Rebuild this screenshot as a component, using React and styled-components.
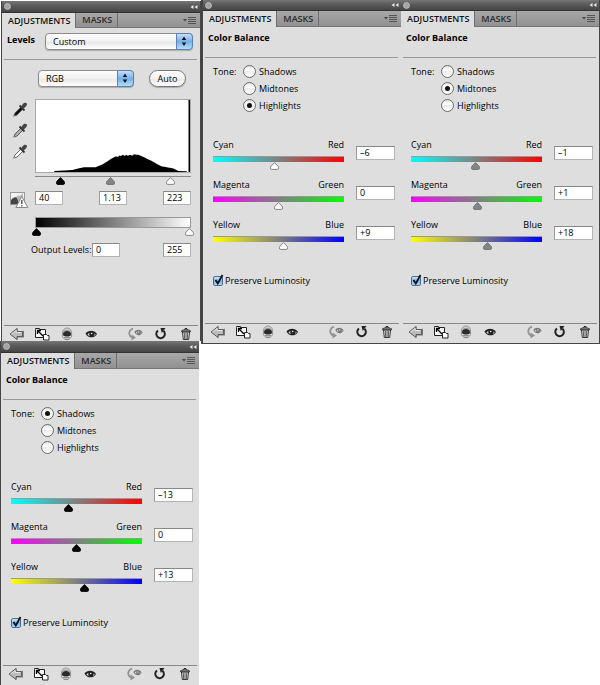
import { useId, useState } from 'react';
import styled, { createGlobalStyle, css } from 'styled-components';

const GlobalStyle = createGlobalStyle`
  * {
    box-sizing: border-box;
  }

  body {
    margin: 0;
    background: #fff;
    color: #000;
    font-family: "Lucida Grande", "Open Sans", "Noto Sans", sans-serif;
    font-size: 9px;
    line-height: 14px;
  }

  button, input, select {
    margin: 0;
    padding: 0;
    color: inherit;
    font: inherit;
  }
`

const thumbImage = (fill, stroke) =>
  `url("data:image/svg+xml,${encodeURIComponent(
    `<svg xmlns="http://www.w3.org/2000/svg" width="9" height="8"><path d="M4.500.6 L8 4.200 Q8.500 4.800 8.500 5.500 V6 Q8.500 7.400 7.500 7.400 H1.500 Q.5 7.400 .5 6 V5.500 Q.5 4.800 1 4.200Z" fill="${fill}" stroke="${stroke}" stroke-width=".9"/></svg>`
  )}")`

const thumbs = {
  black: thumbImage('#000', '#000'),
  gray: thumbImage('#858585', '#6c6c6c'),
  white: thumbImage('#fff', '#777'),
}

const Page = styled.div`
  display: grid;
  grid-template-columns: 201fr 200fr 199fr;
  align-items: start;
`

const PanelBox = styled.section`
  display: flex;
  flex-direction: column;
  background: #dedede;
  border: 0 solid #454545;
  ${({ $kind }) => $kind === 'levels' && css`
    margin: 1px 0 0 1px;
    border-width: 0 1px;
  `}
  ${({ $kind }) => $kind === 'shadows' && css`
    margin-right: 2px;
    border-left-width: 1px;
  `}
  ${({ $kind }) => $kind === 'highlights' && css`
    border-width: 0 0 1px 2px;
  `}
  ${({ $kind }) => $kind === 'midtones' && css`
    border-width: 0 1px 1px 0;
  `}
`

const TitleBar = styled.header`
  display: flex;
  align-items: center;
  justify-content: space-between;
  height: ${({ $tall }) => ($tall ? 12 : 11)}px;
  padding: 0 2px;
  background: linear-gradient(#777, #5c5c5c 40%, #454545);
  border-bottom: 1px solid #333;
`

const BarButton = styled.button`
  display: flex;
  border: 0;
  background: none;
`

const Tabs = styled.div`
  display: flex;
  height: ${({ $short }) => ($short ? 15 : 16)}px;
  background: linear-gradient(#a8a8a8, #909090);
`

const Tab = styled.button`
  padding: 0 5px 0 6px;
  border: 0;
  border-right: 1px solid #6e6e6e;
  border-bottom: ${({ $active }) => ($active ? '0' : '1px solid #777')};
  background: ${({ $active }) => ($active ? '#dedede' : 'transparent')};
  color: ${({ $active }) => ($active ? '#111' : '#2a2a2a')};
  font-weight: 600;
`

const MenuButton = styled(BarButton)`
  flex: 1;
  align-items: center;
  justify-content: flex-end;
  padding-right: 4px;
  border-bottom: 1px solid #777;
`

const Heading = styled.div`
  display: flex;
  align-items: flex-start;
  gap: 10px;
  height: ${({ $levels }) => ($levels ? 32 : 31)}px;
  margin: 0 3px 0 2px;
  padding: ${({ $levels }) => ($levels ? '5px 4px 0 3px' : '4px 3px')};
  border-bottom: 1px solid #999;

  h2 {
    margin: 0;
    font-size: 9px;
    font-weight: 700;
    line-height: 14px;
  }
`

const SelectBox = styled.div`
  position: relative;
  flex: ${({ $width }) => ($width ? `0 1 ${$width}px` : '1')};

  select {
    display: block;
    width: 100%;
    height: 17px;
    padding: 0 22px 0 7px;
    border: 1px solid #8b8b8b;
    border-radius: 4px;
    appearance: none;
    background: linear-gradient(#fff, #f0f0f0 50%, #e6e6e6 51%, #fff);
    box-shadow: 0 1px 1px #aaa;
  }

  svg {
    position: absolute;
    top: 0;
    right: 0;
    pointer-events: none;
  }
`

const AutoButton = styled.button`
  width: 37px;
  height: 17px;
  border: 1px solid #777;
  border-radius: 9px;
  background: linear-gradient(#fff, #f1f1f1 50%, #e8e8e8 51%, #fff);
  box-shadow: 0 1px 1px #aaa;
`

const LevelsBody = styled.div`
  height: 265px;
  padding: 10px 9px 0 0;
`

const ChannelRow = styled.div`
  display: flex;
  justify-content: space-between;
  padding: 0 5px 0 36px;
`

const LevelsGrid = styled.div`
  display: grid;
  grid-template-columns: 33px minmax(0, 1fr);
  margin-top: 12px;
`

const Droppers = styled.div`
  display: flex;
  flex-direction: column;
  align-items: center;
  gap: 6px;
  padding: 3px 0 0 2px;
`

const Chart = styled.svg`
  display: block;
  width: 100%;
  height: 74px;
  border: 1px solid #aaa;
  background: #fff;
`

const ThumbTrack = styled.div`
  display: grid;
  height: ${({ $line }) => ($line ? 11 : 8)}px;
  margin-top: ${({ $line }) => ($line ? 3 : 0)}px;
  border-top: ${({ $line }) => ($line ? '1px solid #888' : '0')};

  input {
    grid-area: 1 / 1;
    height: 8px;
    margin: 0 -3px;
    pointer-events: none;
  }
`

const Range = styled.input`
  display: block;
  min-width: 0;
  appearance: none;
  background: none;

  &::-webkit-slider-thumb {
    width: 9px;
    height: 8px;
    border: 0;
    appearance: none;
    background: ${({ $thumb }) => thumbs[$thumb]} no-repeat;
    pointer-events: auto;
  }
`

const ValueInput = styled.input`
  width: ${({ $wide }) => ($wide ? 39 : 28)}px;
  height: 14px;
  padding: 0 3px;
  border: 1px solid #b4b4b4;
  border-top-color: #888;
  border-left-color: #999;
  background: #fff;
`

const ValueRow = styled.div`
  display: flex;
  justify-content: space-between;
  margin-top: 4px;
`

const ModeCell = styled.div`
  display: flex;
  justify-content: center;
  padding: 4px 0 0 1px;
`

const OutputRamp = styled.div`
  grid-column: 2;
  height: 11px;
  margin-top: 8px;
  border: 1px solid #999;
  background: linear-gradient(90deg, #000, #fff);
`

const OutputTrack = styled(ThumbTrack)`
  grid-column: 2;
`

const OutputRow = styled.div`
  display: flex;
  align-items: center;
  margin-top: 7px;
  padding-left: 29px;

  label {
    flex: 0 0 61px;
    white-space: nowrap;
  }

  input:last-child {
    margin-left: auto;
  }
`

const BalanceBody = styled.div`
  height: 265px;
  padding: 5px 6px 0 10px;
`

const ToneGroup = styled.div`
  display: grid;
  grid-template-columns: 30px 1fr;
  height: 75px;
  line-height: 17px;
`

const ToneOption = styled.label`
  display: flex;
  align-items: center;
  gap: 3px;
  height: 17px;
`

const Radio = styled.input`
  display: grid;
  place-items: center;
  width: 13px;
  height: 13px;
  border: 1px solid #6b6b6b;
  border-radius: 50%;
  appearance: none;
  background: linear-gradient(#e4e4e4, #fff 40%, #ececec 50%, #fff);

  &:checked::after {
    width: 5px;
    height: 5px;
    border-radius: 50%;
    background: #111;
    content: "";
  }
`

const BalanceRow = styled.div`
  display: grid;
  grid-template-columns: minmax(0, 1fr) 39px;
  column-gap: 12px;
  height: 40px;
`

const Ends = styled.div`
  display: flex;
  justify-content: space-between;
`

const BalanceRange = styled(Range)`
  width: 100%;
  height: 14px;
  margin-top: 4px;
  background:
    linear-gradient(#999, #999) top / 100% 1px no-repeat,
    linear-gradient(90deg, ${({ $from }) => $from}, #808080 50%, ${({ $to }) => $to}) top / 100% 6px no-repeat;

  &::-webkit-slider-thumb {
    margin-top: 6px;
  }
`

const BalanceValue = styled(ValueInput)`
  margin-top: 8px;
`

const Preserve = styled.label`
  display: flex;
  align-items: center;
  gap: 2px;
  margin-top: 16px;
`

const CheckWrap = styled.span`
  position: relative;
  display: flex;

  input {
    width: 10px;
    height: 10px;
    border: 1px solid #4a6f9c;
    border-radius: 2px;
    appearance: none;
    background: linear-gradient(#d5e7fa, #75ade8 50%, #a9dcff);
  }

  svg {
    position: absolute;
    top: -2px;
    left: 0;
    pointer-events: none;
  }

  input:not(:checked) + svg {
    display: none;
  }
`

const Toolbar = styled.footer`
  display: flex;
  justify-content: space-between;
  height: ${({ $short }) => ($short ? 16 : 20)}px;
  margin: 0 2px;
  border-top: 1px solid #888;

  div {
    display: flex;
  }

  button {
    display: flex;
    justify-content: center;
    width: 25px;
    height: 16px;
    border: 0;
    background: none;
  }
`

const BackIcon = () => (
  <svg width="16" height="16" viewBox="0 0 16 16">
    <path d="M1 8 8.500 2v3.500H13l2-1v7h-6.500V14Z" fill="#777" />
    <path d="M1 8 8 2.500V5.500h5.500v5H8v3Z" fill="#bcbcbc" stroke="#555" strokeWidth=".9" />
    <path d="m2.500 8 4.700-3.500v2h5" fill="none" stroke="#e5e5e5" />
  </svg>
)

const ExpandIcon = () => (
  <svg width="16" height="16" viewBox="0 0 16 16">
    <path d="M1.500 3.500v-1h4v1h6v8h-10Z" fill="#f7f7f7" stroke="#222" />
    <path d="M3.500 8V4.500H7M4 5l5 5" fill="none" stroke="#000" strokeWidth="1.300" />
    <path d="M9.500 8.500h3l1 1h1.500V14H9.500Z" fill="#fff" stroke="#222" />
  </svg>
)

const ClipIcon = () => (
  <svg width="12" height="16" viewBox="0 0 12 16">
    <circle cx="6" cy="6.500" r="4.500" fill="#d2d2d2" stroke="#888" strokeWidth=".8" />
    <circle cx="6" cy="9" r="4.700" fill="#f0f0f0" stroke="#777" strokeWidth=".8" />
    <path d="M2 8.500a4 3.500 0 0 1 8 0 4 2 0 0 1-8 0Z" fill="#2c2c2c" />
    <path d="M3 11.500h6M4 13h4" stroke="#777" strokeWidth=".8" />
  </svg>
)

const EyeShape = ({ color = '#222' }) => (
  <g>
    <path d="M.5 3.500C3 .2 9-.5 12 4 10 8 4 8.500 1.500 5Z" fill={color} />
    <path d="M2.500 4.500c.8-1 1.500-1.500 2-1.500-.5 1-.3 2.200.3 3-1-.2-1.700-.8-2.300-1.500ZM9.500 3.500c.6.300 1 .6 1.200 1-.4.700-1 1.200-1.600 1.400.5-.8.6-1.600.4-2.400Z" fill="#ddd" />
    <circle cx="6.700" cy="3.500" r=".8" fill="#fff" />
  </g>
)

const EyeIcon = () => (
  <svg width="13" height="16" viewBox="0 0 13 16">
    <g transform="translate(0 4)"><EyeShape /></g>
  </svg>
)

const PreviousIcon = () => (
  <svg width="17" height="16" viewBox="0 0 17 16">
    <path d="M6 2.500C1.500 4.500.8 9 5 11.500" fill="none" stroke="#929292" strokeWidth="1.700" />
    <path d="m4.500 8.500 4.500 3-4.500 3Z" fill="#929292" />
    <g transform="translate(7 3) scale(.72 .85)"><EyeShape color="#777" /></g>
  </svg>
)

const ResetIcon = () => (
  <svg width="13" height="16" viewBox="0 0 13 16">
    <path d="M4 4.500a4.300 4.300 0 1 0 5.500.3" fill="none" stroke="#222" strokeWidth="2" />
    <path d="M6.500 2h5L7.800 7Z" fill="#222" />
  </svg>
)

const TrashIcon = () => (
  <svg width="12" height="16" viewBox="0 0 12 16">
    <path d="M2.500 6h7L8.700 13.500H3.300Z" fill="#eee" stroke="#222" strokeWidth=".9" />
    <path d="m4.300 7 .4 6M6 7v6M7.700 7l-.4 6" stroke="#333" strokeWidth=".8" />
    <path d="M1.500 4.800c2-1.500 7-1.500 9 0v1h-9Z" fill="#888" stroke="#222" strokeWidth=".8" />
    <path d="M4.500 3.600c0-1.600 3-1.600 3 0" fill="none" stroke="#222" />
  </svg>
)

const DropperIcon = ({ fill }) => (
  <svg width="16" height="15" viewBox="0 0 16 15">
    <path d="M2 13.500 3 11l6-6 2 2-6 6-2.500 1Z" fill={fill} stroke="#555" strokeWidth=".9" />
    <path d="m7.500 3.500 5 5" stroke="#333" strokeWidth="1.800" />
    <path d="M9 4.800c.5-1.300 1.800-3 3.500-4 2-.5 3 .8 2.200 2.400-.8 1.500-2 2.600-3.500 3.600Z" fill="#444" />
    <path d="m1 14.500 1.500-1.500" stroke="#888" />
  </svg>
)

const ModeIcon = () => (
  <svg width="20" height="18" viewBox="0 0 20 18">
    <rect x="1.500" y="1.500" width="14" height="12" fill="#f3f3f3" stroke="#999" />
    <path d="M3 11c0-5 2-5 4-5 2-2 3-2 4-1l3-3v10H3Z" fill="#b8b8b8" />
    <path d="M2 13V9c2-2 3-3 6-2l2 6Z" fill="#444" />
    <path d="m12.800 5.500 6 11h-12Z" fill="#fff" stroke="#888" />
    <path d="M12.800 9v4m0 1.300v1.200" stroke="#444" strokeWidth="1.300" />
  </svg>
)

const Arrows = () => (
  <svg width="17" height="17" viewBox="0 0 17 17">
    <defs>
      <linearGradient id="aqua" x2="0" y2="1">
        <stop stopColor="#cfe3f8" />
        <stop offset=".5" stopColor="#78aee8" />
        <stop offset="1" stopColor="#b3e3ff" />
      </linearGradient>
    </defs>
    <path d="M.5.5H13q3.500 0 3.500 3.500v9q0 3.500-3.500 3.500H.5Z" fill="url(#aqua)" stroke="#5c82b3" />
    <path d="M8 3.500 10.200 7H5.800ZM8 13 5.800 9.500h4.400Z" fill="#111" />
  </svg>
)

function Select({ options, width, label }) {
  return (
    <SelectBox $width={width}>
      <select aria-label={label}>
        {options.map((option) => <option key={option}>{option}</option>)}
      </select>
      <Arrows />
    </SelectBox>
  )
}

function Panel({ kind, children }) {
  const levels = kind === 'levels'
  return (
    <PanelBox $kind={kind}>
      <TitleBar $tall={levels || kind === 'shadows'}>
        <BarButton aria-label="Close">
          <svg width="7" height="7"><circle cx="3.500" cy="3.500" r="3" fill="#a4a4a4" stroke="#ccc" strokeWidth=".7" /></svg>
        </BarButton>
        <BarButton aria-label="Collapse">
          <svg width="8" height="6"><path d="M3.500 1v4L.5 3ZM7.500 1v4l-3-2Z" fill="#e8e8e8" /></svg>
        </BarButton>
      </TitleBar>
      <Tabs $short={levels}>
        <Tab $active>ADJUSTMENTS</Tab>
        <Tab>MASKS</Tab>
        <MenuButton aria-label="Panel menu">
          <svg width="13" height="7"><path d="M0 2h4L2 4.500Z" fill="#444" /><path d="M5 .5h8M5 2.500h8M5 4.500h8M5 6.500h8" stroke="#555" /></svg>
        </MenuButton>
      </Tabs>
      {children}
      <Toolbar $short={levels}>
        <div>
          <button aria-label="Return to list"><BackIcon /></button>
          <button aria-label="Expand view"><ExpandIcon /></button>
          <button aria-label="Clip to layer"><ClipIcon /></button>
          <button aria-label="Toggle visibility"><EyeIcon /></button>
        </div>
        <div>
          <button aria-label="View previous state"><PreviousIcon /></button>
          <button aria-label="Reset"><ResetIcon /></button>
          <button aria-label="Delete"><TrashIcon /></button>
        </div>
      </Toolbar>
    </PanelBox>
  )
}

function LevelsPanel() {
  const id = useId()
  return (
    <Panel kind="levels">
      <Heading $levels>
        <h2>Levels</h2>
        <Select options={['Custom', 'Default']} label="Preset" />
      </Heading>
      <LevelsBody>
        <ChannelRow>
          <Select options={['RGB', 'Red', 'Green', 'Blue']} width={96} label="Channel" />
          <AutoButton>Auto</AutoButton>
        </ChannelRow>
        <LevelsGrid>
          <Droppers>
            <DropperIcon fill="#111" />
            <DropperIcon fill="#aaa" />
            <DropperIcon fill="#fff" />
          </Droppers>
          <div>
            <Chart viewBox="0 0 465 222" preserveAspectRatio="none">
              <path d="M55 222V219L85 217 110 216 127 211 145 207H180L200 199 215 190 227 181 240 174 248 175 252 171 257 173 262 169 268 173 272 169 277 172 285 169 290 172 296 167 302 169 309 169 316 172 323 175 335 181 350 188 365 197 378 204 395 207 415 211 430 219 455 220V222Z" />
              <path d="M463 0V222" stroke="#000" strokeWidth="5" />
            </Chart>
            <ThumbTrack $line>
              <Range type="range" min="0" max="255" defaultValue="40" $thumb="black" aria-label="Black input" />
              <Range type="range" min="0" max="255" defaultValue="124" $thumb="gray" aria-label="Gamma input" />
              <Range type="range" min="0" max="255" defaultValue="223" $thumb="white" aria-label="White input" />
            </ThumbTrack>
          </div>
          <ModeCell><ModeIcon /></ModeCell>
          <ValueRow>
            <ValueInput defaultValue="40" aria-label="Black input level" />
            <ValueInput defaultValue="1.13" aria-label="Gamma level" />
            <ValueInput defaultValue="223" aria-label="White input level" />
          </ValueRow>
          <OutputRamp />
          <OutputTrack>
            <Range type="range" min="0" max="255" defaultValue="0" $thumb="black" aria-label="Black output" />
            <Range type="range" min="0" max="255" defaultValue="255" $thumb="white" aria-label="White output" />
          </OutputTrack>
        </LevelsGrid>
        <OutputRow>
          <label htmlFor={id}>Output Levels:</label>
          <ValueInput id={id} defaultValue="0" />
          <ValueInput defaultValue="255" aria-label="White output level" />
        </OutputRow>
      </LevelsBody>
    </Panel>
  )
}

const tones = ['Shadows', 'Midtones', 'Highlights']

const axes = [
  { low: 'Cyan', high: 'Red', from: '#00ffff', to: '#ff0000' },
  { low: 'Magenta', high: 'Green', from: '#ff00ff', to: '#00ff00' },
  { low: 'Yellow', high: 'Blue', from: '#ffff00', to: '#0000ff' },
]

const signed = (n) => (n > 0 ? `+${n}` : n < 0 ? `–${-n}` : '0')

function BalancePanel({ kind, tone, thumb, initial }) {
  const id = useId()
  const [selected, setSelected] = useState(tone)
  const [values, setValues] = useState(initial)

  const change = (index, value) => {
    const next = Number(value.replace('–', '-'))
    if (!Number.isNaN(next)) {
      setValues(values.map((old, i) => (i === index ? next : old)))
    }
  }

  return (
    <Panel kind={kind}>
      <Heading><h2>Color Balance</h2></Heading>
      <BalanceBody>
        <ToneGroup role="radiogroup" aria-labelledby={`${id}-tone`}>
          <span id={`${id}-tone`}>Tone:</span>
          <div>
            {tones.map((name) => (
              <ToneOption key={name}>
                <Radio type="radio" name={id} checked={selected === name} onChange={() => setSelected(name)} />
                {name}
              </ToneOption>
            ))}
          </div>
        </ToneGroup>
        {axes.map(({ low, high, from, to }, i) => (
          <BalanceRow key={low}>
            <div>
              <Ends><span>{low}</span><span>{high}</span></Ends>
              <BalanceRange
                type="range"
                min="-100"
                max="100"
                value={values[i]}
                onChange={(e) => change(i, e.target.value)}
                aria-label={`${low} to ${high}`}
                $from={from}
                $to={to}
                $thumb={thumb}
              />
            </div>
            <BalanceValue $wide value={signed(values[i])} onChange={(e) => change(i, e.target.value)} aria-label={`${low} to ${high} amount`} />
          </BalanceRow>
        ))}
        <Preserve>
          <CheckWrap>
            <input type="checkbox" defaultChecked />
            <svg width="11" height="12"><path d="m2.500 6 2.300 3.500L9.500 1" fill="none" stroke="#111" strokeWidth="1.800" /></svg>
          </CheckWrap>
          Preserve Luminosity
        </Preserve>
      </BalanceBody>
    </Panel>
  )
}

export default function App() {
  return <>
    <GlobalStyle />
    <Page>
      <div>
        <LevelsPanel />
        <BalancePanel kind="shadows" tone="Shadows" thumb="black" initial={[-13, 0, 13]} />
      </div>
      <BalancePanel kind="highlights" tone="Highlights" thumb="white" initial={[-6, 0, 9]} />
      <BalancePanel kind="midtones" tone="Midtones" thumb="gray" initial={[-1, 1, 18]} />
    </Page>
  </>
}
